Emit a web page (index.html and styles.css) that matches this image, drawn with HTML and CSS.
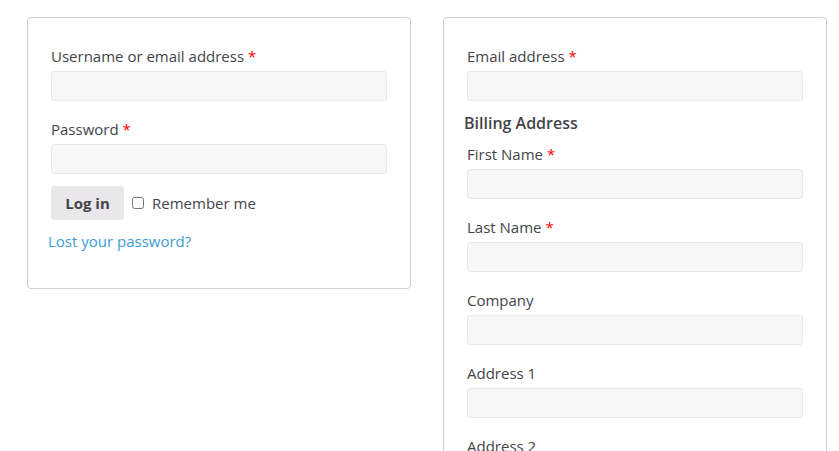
FILE: index.html
```html
<!DOCTYPE html>
<html>
<head>
<meta charset="utf-8">
<link rel="stylesheet" href="styles.css">
</head>
<body>
<div class="page">
  <form class="card login">
    <div class="field">
      <label>Username or email address <span class="req">*</span></label>
      <input type="text" class="input">
    </div>
    <div class="field">
      <label>Password <span class="req">*</span></label>
      <input type="password" class="input">
    </div>
    <div class="actions">
      <button type="button" class="btn">Log in</button>
      <label class="remember"><input type="checkbox" class="check"><span>Remember me</span></label>
    </div>
    <p class="lost"><a href="#">Lost your password?</a></p>
  </form>
  <form class="card register">
    <div class="field">
      <label>Email address <span class="req">*</span></label>
      <input type="email" class="input">
    </div>
    <h3 class="section">Billing Address</h3>
    <div class="field">
      <label>First Name <span class="req">*</span></label>
      <input type="text" class="input">
    </div>
    <div class="field">
      <label>Last Name <span class="req">*</span></label>
      <input type="text" class="input">
    </div>
    <div class="field">
      <label>Company</label>
      <input type="text" class="input">
    </div>
    <div class="field">
      <label>Address 1</label>
      <input type="text" class="input">
    </div>
    <div class="field">
      <label>Address 2</label>
      <input type="text" class="input">
    </div>
  </form>
</div>
</body>
</html>
```
FILE: styles.css
```css
html, body {
  margin: 0;
  padding: 0;
  background: #fff;
  overflow: hidden;
}
body {
  font-family: "Open Sans", "Noto Sans", sans-serif;
  font-size: 15px;
  line-height: 22.5px;
  color: #43454b;
}
.page {
  display: flex;
  align-items: flex-start;
  gap: 32px;
  padding: 17px 0 0 27px;
}
.card {
  box-sizing: border-box;
  width: 384px;
  border: 1px solid #cfcfcf;
  border-radius: 4px;
  padding: 27px 23px 35px 23px;
  margin: 0;
}
.field {
  display: flex;
  flex-direction: column;
  margin-bottom: 17px;
}
.field label {
  display: block;
  margin-bottom: 3px;
}
.req {
  color: #f00;
}
.input {
  box-sizing: border-box;
  height: 30.5px;
  width: 100%;
  margin: 0;
  background: #f7f7f7;
  border: 1px solid #e8e8e8;
  border-radius: 3px;
  font: inherit;
  outline: none;
}
.login .field:nth-child(2) {
  margin-bottom: 12px;
}
.actions {
  display: flex;
  align-items: center;
}
.btn {
  width: 73px;
  height: 34px;
  border: none;
  border-radius: 3px;
  background: #e9e7ea;
  color: #43454b;
  font-family: "Open Sans", "Noto Sans", sans-serif;
  font-size: 15px;
  font-weight: 700;
  padding: 0;
  margin-right: 8px;
}
.remember {
  display: flex;
  align-items: center;
}
.check {
  width: 12px;
  height: 12px;
  margin: 0 8px 0 0;
}
.lost {
  margin: 10px 0 0 -3px;
}
.lost a {
  color: #3d9cd2;
  text-decoration: none;
}
.section {
  font-size: 16px;
  font-weight: 600;
  line-height: 24px;
  margin: -7px 0 8px -3px;
}
.register {
  height: 470px;
}
```
